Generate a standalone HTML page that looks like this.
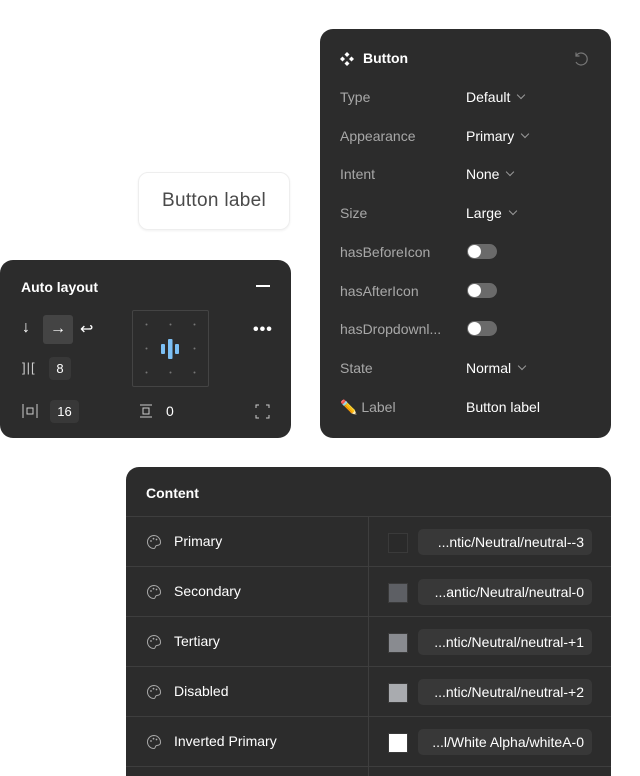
<!DOCTYPE html>
<html style="width:640px;height:776px;overflow:hidden"><head><style>
*{margin:0;padding:0;box-sizing:border-box}
body{width:640px;height:776px;background:#fff;position:relative;overflow:hidden;font-family:"Liberation Sans",sans-serif;color:#fff;font-size:14px}
.p{position:absolute;background:#2c2c2c;border-radius:13px}
.a{position:absolute;white-space:nowrap}
.lbl{color:#a8a8a8}
.chev{display:inline-block;width:6px;height:6px;border-right:1px solid #999;border-bottom:1px solid #999;transform:rotate(45deg);margin-left:8px;position:relative;top:-4px}
.tog{position:absolute;width:30px;height:15px;border-radius:8px;background:#6a6a6a}
.tog:before{content:"";position:absolute;left:1px;top:1px;width:13px;height:13px;border-radius:50%;background:#fff}
.row{position:absolute;left:0;width:485px;height:50px;border-top:1px solid #3e3e3e}
.sw{position:absolute;left:262px;top:16px;width:20px;height:20px;border:1px solid #3a3a3a}
.pill{position:absolute;left:292px;top:12px;width:174px;height:26px;background:#383838;border-radius:5px;text-align:right;padding-right:8px;line-height:26px;font-size:14px}
.rl{position:absolute;left:48px;top:16px;font-size:14px}
.pi{position:absolute;left:20px;top:17px}
</style></head><body>

<div class="a" style="left:138px;top:172px;width:152px;height:58px;border:1px solid #eee;border-radius:10px;box-shadow:0 1px 2px rgba(0,0,0,.06);color:#4a4a4a;font-size:19px;line-height:56px;text-align:center;letter-spacing:.3px">Button label</div>

<div class="p" style="left:0;top:260px;width:291px;height:178px">
 <div class="a" style="left:21px;top:19px;font-weight:bold;font-size:14px">Auto layout</div>
 <div class="a" style="left:256px;top:25px;width:14px;height:1.5px;background:#fff"></div>
 <div class="a" style="left:22px;top:59px;font-size:16px">↓</div>
 <div class="a" style="left:43px;top:55px;width:30px;height:29px;background:#444;border-radius:3px;text-align:center;line-height:28px;font-size:16px">→</div>
 <div class="a" style="left:80px;top:59px;font-size:16px">↩</div>
 <div class="a" style="left:22px;top:100px;font-size:13px;color:#ccc;letter-spacing:1px">]|[</div>
 <div class="a" style="left:49px;top:97px;width:22px;height:23px;background:#383838;border-radius:4px;text-align:center;line-height:23px;font-size:13px">8</div>
 <svg class="a" style="left:22px;top:144px" width="16" height="14"><path d="M1 0V14M15 0V14M5 4H11V10H5Z" stroke="#ccc" fill="none"/></svg>
 <div class="a" style="left:50px;top:140px;width:29px;height:23px;background:#383838;border-radius:4px;text-align:center;line-height:23px;font-size:13px">16</div>
 <div class="a" style="left:132px;top:50px;width:77px;height:77px;border:1px solid #444;border-radius:2px">
  <svg width="77" height="77" style="position:absolute;left:-1px;top:-1px">
   <g fill="#777"><circle cx="14.5" cy="14.5" r="1"/><circle cx="38.5" cy="14.5" r="1"/><circle cx="62.5" cy="14.5" r="1"/><circle cx="14.5" cy="38.5" r="1"/><circle cx="62.5" cy="38.5" r="1"/><circle cx="14.5" cy="62.5" r="1"/><circle cx="38.5" cy="62.5" r="1"/><circle cx="62.5" cy="62.5" r="1"/></g>
   <rect x="29" y="34" width="4" height="10" rx="1" fill="#7cc0f5"/><rect x="36" y="29" width="4.5" height="20" rx="1" fill="#7cc0f5"/><rect x="43" y="34" width="4" height="10" rx="1" fill="#7cc0f5"/>
  </svg>
 </div>
 <div class="a" style="left:253px;top:61px;font-size:16px;letter-spacing:1px;font-weight:bold">•••</div>
 <div class="a" style="left:139px;top:144px;width:14px;height:14px">
  <svg width="14" height="14"><path d="M1 1H13M1 13H13M4 4H10V10H4Z" stroke="#ccc" fill="none"/></svg></div>
 <div class="a" style="left:166px;top:143px;font-size:14px">0</div>
 <div class="a" style="left:255px;top:144px"><svg width="15" height="15"><path d="M1 4V1H4M11 1H14V4M14 11V14H11M4 14H1V11" stroke="#ccc" fill="none"/></svg></div>
</div>

<div class="p" style="left:320px;top:29px;width:291px;height:409px">
 <svg class="a" style="left:20px;top:23px" width="14" height="14"><g fill="#fff"><path d="M7 0L9.5 2.5 7 5 4.5 2.5Z"/><path d="M7 9L9.5 11.5 7 14 4.5 11.5Z"/><path d="M2.5 4.5L5 7 2.5 9.5 0 7Z"/><path d="M11.5 4.5L14 7 11.5 9.5 9 7Z"/></g></svg>
 <div class="a" style="left:43px;top:21px;font-weight:bold;font-size:14px">Button</div>
 <svg class="a" style="left:253px;top:22px" width="16" height="16"><path d="M3 5A6 6 0 1 1 3 11M3 1.5V5H6.5" stroke="#777" stroke-width="1.2" fill="none"/></svg>
 <div class="a lbl" style="left:20px;top:60px">Type</div><div class="a" style="left:146px;top:60px">Default<span class="chev"></span></div>
 <div class="a lbl" style="left:20px;top:99px">Appearance</div><div class="a" style="left:146px;top:99px">Primary<span class="chev"></span></div>
 <div class="a lbl" style="left:20px;top:137px">Intent</div><div class="a" style="left:146px;top:137px">None<span class="chev"></span></div>
 <div class="a lbl" style="left:20px;top:176px">Size</div><div class="a" style="left:146px;top:176px">Large<span class="chev"></span></div>
 <div class="a lbl" style="left:20px;top:215px">hasBeforeIcon</div><div class="tog" style="left:147px;top:215px"></div>
 <div class="a lbl" style="left:20px;top:254px">hasAfterIcon</div><div class="tog" style="left:147px;top:254px"></div>
 <div class="a lbl" style="left:20px;top:292px">hasDropdownl...</div><div class="tog" style="left:147px;top:292px"></div>
 <div class="a lbl" style="left:20px;top:331px">State</div><div class="a" style="left:146px;top:331px">Normal<span class="chev"></span></div>
 <div class="a lbl" style="left:20px;top:370px">✏️ Label</div><div class="a" style="left:146px;top:370px">Button label</div>
</div>

<div class="p" style="left:126px;top:467px;width:485px;height:309px;overflow:hidden;border-radius:13px 13px 0 0">
 <div class="a" style="left:20px;top:18px;font-weight:bold;font-size:14px">Content</div>
 <div class="a" style="left:242px;top:49px;width:1px;height:260px;background:#3e3e3e"></div>
 <div class="row" style="top:49px"><svg class="pi" width="16" height="16"><path d="M8 1.5A6.5 6.5 0 0 0 8 14.5C9.5 14.5 9 12.5 10 11.8 11 11 14.5 12 14.5 8.5A6.8 6.8 0 0 0 8 1.5Z" stroke="#aaa" fill="none"/><circle cx="5" cy="7" r=".9" fill="#aaa"/><circle cx="7.5" cy="4.7" r=".9" fill="#aaa"/><circle cx="10.5" cy="5.5" r=".9" fill="#aaa"/></svg><div class="rl">Primary</div><div class="sw" style="background:#2a2a2a"></div><div class="pill">...ntic/Neutral/neutral--3</div></div>
 <div class="row" style="top:99px"><svg class="pi" width="16" height="16"><path d="M8 1.5A6.5 6.5 0 0 0 8 14.5C9.5 14.5 9 12.5 10 11.8 11 11 14.5 12 14.5 8.5A6.8 6.8 0 0 0 8 1.5Z" stroke="#aaa" fill="none"/><circle cx="5" cy="7" r=".9" fill="#aaa"/><circle cx="7.5" cy="4.7" r=".9" fill="#aaa"/><circle cx="10.5" cy="5.5" r=".9" fill="#aaa"/></svg><div class="rl">Secondary</div><div class="sw" style="background:#5d5f64"></div><div class="pill">...antic/Neutral/neutral-0</div></div>
 <div class="row" style="top:149px"><svg class="pi" width="16" height="16"><path d="M8 1.5A6.5 6.5 0 0 0 8 14.5C9.5 14.5 9 12.5 10 11.8 11 11 14.5 12 14.5 8.5A6.8 6.8 0 0 0 8 1.5Z" stroke="#aaa" fill="none"/><circle cx="5" cy="7" r=".9" fill="#aaa"/><circle cx="7.5" cy="4.7" r=".9" fill="#aaa"/><circle cx="10.5" cy="5.5" r=".9" fill="#aaa"/></svg><div class="rl">Tertiary</div><div class="sw" style="background:#898b90"></div><div class="pill">...ntic/Neutral/neutral-+1</div></div>
 <div class="row" style="top:199px"><svg class="pi" width="16" height="16"><path d="M8 1.5A6.5 6.5 0 0 0 8 14.5C9.5 14.5 9 12.5 10 11.8 11 11 14.5 12 14.5 8.5A6.8 6.8 0 0 0 8 1.5Z" stroke="#aaa" fill="none"/><circle cx="5" cy="7" r=".9" fill="#aaa"/><circle cx="7.5" cy="4.7" r=".9" fill="#aaa"/><circle cx="10.5" cy="5.5" r=".9" fill="#aaa"/></svg><div class="rl">Disabled</div><div class="sw" style="background:#a9abaf"></div><div class="pill">...ntic/Neutral/neutral-+2</div></div>
 <div class="row" style="top:249px"><svg class="pi" width="16" height="16"><path d="M8 1.5A6.5 6.5 0 0 0 8 14.5C9.5 14.5 9 12.5 10 11.8 11 11 14.5 12 14.5 8.5A6.8 6.8 0 0 0 8 1.5Z" stroke="#aaa" fill="none"/><circle cx="5" cy="7" r=".9" fill="#aaa"/><circle cx="7.5" cy="4.7" r=".9" fill="#aaa"/><circle cx="10.5" cy="5.5" r=".9" fill="#aaa"/></svg><div class="rl">Inverted Primary</div><div class="sw" style="background:#fff"></div><div class="pill">...l/White Alpha/whiteA-0</div></div>
 <div class="row" style="top:299px;height:10px"></div>
</div>
</body></html>
